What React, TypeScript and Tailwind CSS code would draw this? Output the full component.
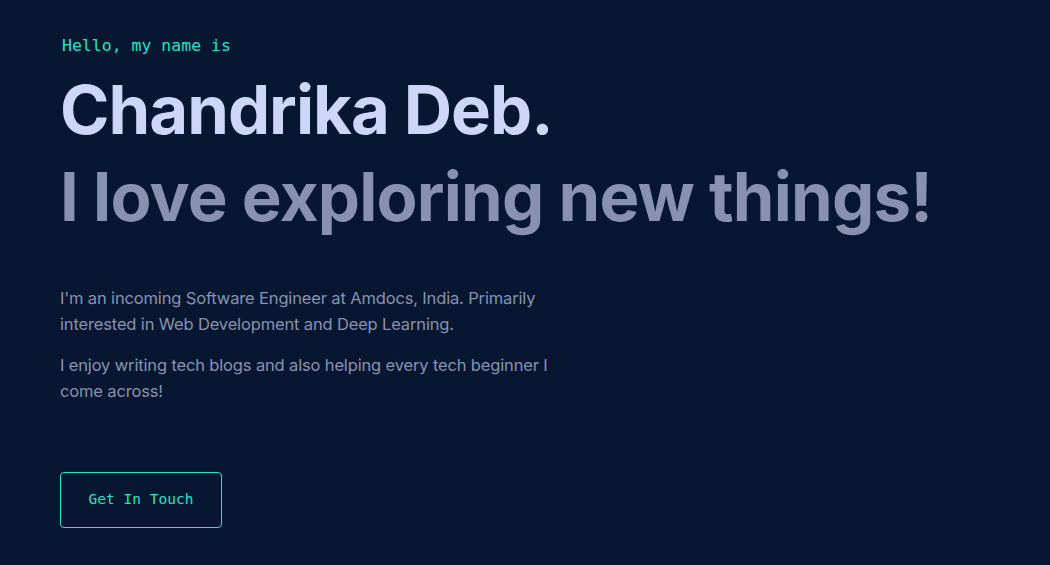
import React from "react";

export default function App() {
  return (
    <div className="min-h-[565px] w-full bg-[#071731] pl-[60px] pt-[34px]">
      <h1 className="ml-[2px] text-[16.5px] leading-[24px] text-[#22e3c8] [font-family:'DejaVu_Sans_Mono',monospace]">
        Hello, my name is
      </h1>
      <div className="mt-[8px] [font-family:Inter,sans-serif] font-bold">
        <h2 className="text-[67px] leading-[87px] tracking-[-1px] text-[#ccd6f6]">Chandrika Deb.</h2>
        <h3 className="text-[67px] leading-[87px] tracking-[-0.8px] text-[#8892b0]">I love exploring new things!</h3>
      </div>
      <div className="mt-[45px] max-w-[500px] text-[16.5px] leading-[26px] tracking-[-0.15px] text-[#8892b0] [font-family:Inter,sans-serif]">
        <p>I'm an incoming Software Engineer at Amdocs, India. Primarily interested in Web Development and Deep Learning.</p>
        <p className="mt-[15px]">I enjoy writing tech blogs and also helping every tech beginner I come across!</p>
      </div>
      <button className="mt-[68px] flex h-[56px] w-[162px] items-center justify-center rounded-[4px] border border-[#22e6d2] text-[14.5px] text-[#22e3c8] [font-family:'DejaVu_Sans_Mono',monospace]">
        Get In Touch
      </button>
    </div>
  );
}
